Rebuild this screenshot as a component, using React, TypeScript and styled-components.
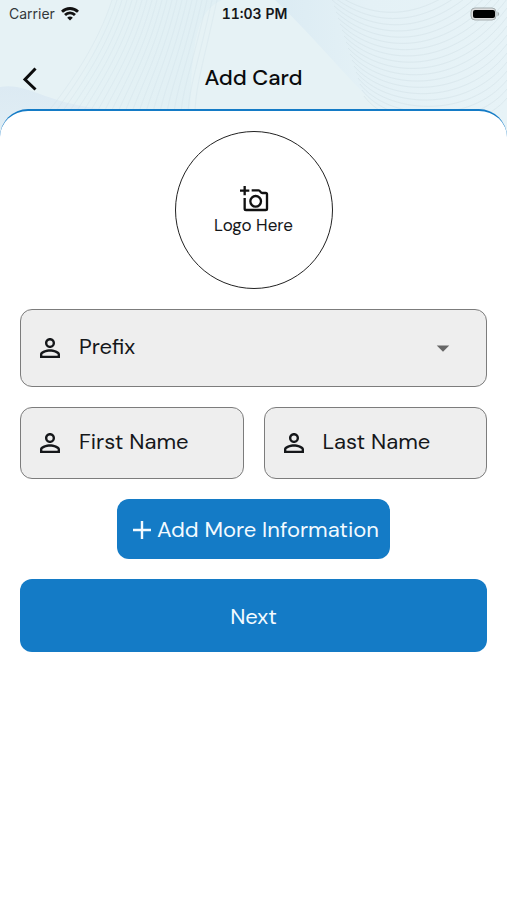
import React from "react";
import styled, { createGlobalStyle } from "styled-components";
import { MdPersonOutline, MdArrowDropDown } from "react-icons/md";

const GlobalStyle = createGlobalStyle`
  *, *::before, *::after { box-sizing: border-box; }
  body {
    margin: 0;
    background: #fff;
    color: #15171a;
    font-family: "DM Sans", Inter, "Liberation Sans", sans-serif;
  }
  button, input, select { font: inherit; color: inherit; }
`;

const blue = "#147bc6";

const Screen = styled.div`
  position: relative;
  isolation: isolate;
  display: flex;
  flex-direction: column;
  min-height: 100vh;
`;

const Backdrop = styled.svg`
  position: absolute;
  z-index: -1;
  top: 0;
  left: 0;
  width: 100%;
  height: 150px;
  background: #e6f2f5;
`;

const StatusBar = styled.div`
  display: grid;
  grid-template-columns: 1fr auto 1fr;
  align-items: center;
  height: 28px;
  padding: 0 7px 0 9px;
  font-family: Inter, "Liberation Sans", sans-serif;
  font-size: 14px;
  line-height: 20px;
`;

const Carrier = styled.span`
  display: flex;
  align-items: center;
  gap: 6px;
  color: #33383b;
`;

const Clock = styled.time`
  font-size: 14px;
  font-weight: 600;
  font-variant-numeric: tabular-nums;
`;

const Battery = styled.svg`
  justify-self: end;
`;

const AppBar = styled.header`
  display: grid;
  grid-template-columns: 40px 1fr 40px;
  align-items: center;
  height: 81px;
  padding: 20px 10px 0;
`;

const BackButton = styled.button`
  display: grid;
  place-items: center;
  width: 40px;
  height: 40px;
  padding: 0;
  border: 0;
  background: none;
  cursor: pointer;
`;

const Title = styled.h1`
  margin: 0;
  padding-bottom: 2px;
  text-align: center;
  font-size: 22px;
  line-height: 28px;
  font-weight: 500;
  color: #090b0c;
`;

const Sheet = styled.form`
  flex: 1;
  display: flex;
  flex-direction: column;
  gap: 20px;
  padding: 20px;
  border-top: 2px solid ${blue};
  border-radius: 28px 28px 0 0;
  background: #fff;
`;

const LogoPicker = styled.button`
  align-self: center;
  display: flex;
  flex-direction: column;
  align-items: center;
  justify-content: center;
  width: 158px;
  height: 158px;
  padding: 2px 0 0;
  border: 1px solid #222;
  border-radius: 50%;
  background: #fff;
  font-size: 17px;
  line-height: 24px;
  cursor: pointer;
`;

const Field = styled.label<{ $tall?: boolean }>`
  display: flex;
  align-items: center;
  gap: 14px;
  min-width: 0;
  height: ${(p) => (p.$tall ? 78 : 72)}px;
  padding: 0 14px;
  border: 1px solid #7c7c7c;
  border-radius: 12px;
  background: #eee;
  font-size: 22px;

  > svg { flex: none; }
`;

const TextInput = styled.input`
  flex: 1;
  min-width: 0;
  height: 100%;
  padding: 0 0 4px;
  border: 0;
  outline: 0;
  background: none;

  &::placeholder { color: #15171a; opacity: 1; }
`;

const Select = styled.select`
  flex: 1;
  min-width: 0;
  height: 100%;
  padding: 0 0 4px;
  border: 0;
  outline: 0;
  appearance: none;
  background: none;
`;

const SelectArrow = styled(MdArrowDropDown)`
  margin-right: 14px;
  color: #666;
  pointer-events: none;
`;

const NameRow = styled.div`
  display: grid;
  grid-template-columns: 1fr 1fr;
  gap: 20px;
`;

const PrimaryButton = styled.button<{ $compact?: boolean }>`
  display: flex;
  align-items: center;
  justify-content: center;
  align-self: ${(p) => (p.$compact ? "center" : "stretch")};
  gap: 6px;
  height: ${(p) => (p.$compact ? 60 : 73)}px;
  padding: ${(p) => (p.$compact ? "2px 11px 0 16px" : "2px 16px 0")};
  border: 0;
  border-radius: 12px;
  background: ${blue};
  color: #f2faff;
  font-size: 22px;
  line-height: 28px;
  cursor: pointer;
`;

const range = (n: number) => Array.from({ length: n }, (_, i) => i);

function Waves() {
  return (
    <Backdrop viewBox="0 0 507 150" preserveAspectRatio="xMidYMid slice" aria-hidden="true">
      <defs>
        <linearGradient id="band" x1="0" y1="0" x2="1" y2="0">
          <stop offset="0" stopColor="#dbebf3" />
          <stop offset=".4" stopColor="#e4f1f6" />
          <stop offset="1" stopColor="#e7f3f7" />
        </linearGradient>
        <linearGradient id="fan" x1="0" y1="0" x2="1" y2="0">
          <stop offset=".2" stopColor="#e5f2f5" />
          <stop offset="1" stopColor="#e0eff4" />
        </linearGradient>
        <linearGradient id="hill" x1="0" y1="0" x2="0" y2="1">
          <stop offset="0" stopColor="#dceaf3" />
          <stop offset="1" stopColor="#e2eff5" />
        </linearGradient>
      </defs>
      <path d="M112 0H222C196 12 190 40 190 150H40C78 104 94 52 112 0Z" fill="url(#fan)" />
      <path d="M275 0H507V150H430C370 110 330 52 275 0Z" fill="url(#band)" />
      <path d="M0 87C28 82 45 104 105 109V150H0Z" fill="url(#hill)" />
      <g fill="none" stroke="#cfe0e9" strokeWidth="1" opacity=".35">
        {range(22).map((i) => (
          <path
            key={i}
            d={`M${112 + i * 5} 0C${98 + i * 5} ${44 + i} ${70 + i * 6} 84 ${48 + i * 7} 112`}
          />
        ))}
      </g>
      <g fill="none" stroke="#d2e1e7" strokeWidth="1" opacity=".5">
        {range(19).map((i) => (
          <path
            key={i}
            d={`M${328 + i * 2} ${i * 6 - 12}C${372 + i} ${24 + i * 6} ${438 + i * 2} ${30 + i * 6} 507 ${i * 9 - 64}`}
          />
        ))}
      </g>
    </Backdrop>
  );
}

function WifiIcon() {
  return (
    <svg width="18" height="14" viewBox="0 0 18 14" fill="none" stroke="#111" strokeWidth="2.8" aria-hidden="true">
      <path d="M1 4.8C5.5 .4 12.5 .4 17 4.8" />
      <path d="M4 8C6.8 5.2 11.2 5.2 14 8" />
      <path d="M9 13.6L6.2 10.7C7.8 9.2 10.2 9.2 11.8 10.7Z" fill="#111" stroke="none" />
    </svg>
  );
}

function AddPhotoIcon() {
  return (
    <svg width="30" height="28" viewBox="0 0 90 84" fill="none" stroke="#111" strokeWidth="7" aria-hidden="true">
      <path d="M17 3V31M3 17H31" />
      <path d="M38 16H59C64 16 64 24 70 24H80Q84 24 84 28V71Q84 75 80 75H21Q17 75 17 71V39" />
      <circle cx="50" cy="49" r="16" />
    </svg>
  );
}

export default function App() {
  return (
    <>
      <GlobalStyle />
      <Screen>
        <Waves />
        <StatusBar>
          <Carrier>
            Carrier
            <WifiIcon />
          </Carrier>
          <Clock>11:03 PM</Clock>
          <Battery width="30" height="14" viewBox="0 0 30 14" role="img" aria-label="Battery full">
            <rect x="1" y="1" width="25" height="12" rx="4" fill="#ddd" stroke="#a5adaf" />
            <rect x="3" y="3" width="22" height="8" rx="2" fill="#000" />
            <path d="M27.5 4.5Q31 7 27.5 9.5Z" fill="#a5adaf" />
          </Battery>
        </StatusBar>
        <AppBar>
          <BackButton type="button" aria-label="Back">
            <svg width="16" height="24" viewBox="0 0 16 24" fill="none" stroke="#0c0c0c" strokeWidth="3">
              <path d="M13.5 1.5L3 12.5L13.5 22.5" />
            </svg>
          </BackButton>
          <Title>Add Card</Title>
        </AppBar>
        <Sheet onSubmit={(e) => e.preventDefault()}>
          <LogoPicker type="button">
            <AddPhotoIcon />
            Logo Here
          </LogoPicker>
          <Field $tall>
            <MdPersonOutline size={30} />
            <Select aria-label="Prefix" defaultValue="">
              <option value="">Prefix</option>
            </Select>
            <SelectArrow size={30} />
          </Field>
          <NameRow>
            <Field>
              <MdPersonOutline size={30} />
              <TextInput aria-label="First Name" placeholder="First Name" />
            </Field>
            <Field>
              <MdPersonOutline size={30} />
              <TextInput aria-label="Last Name" placeholder="Last Name" />
            </Field>
          </NameRow>
          <PrimaryButton type="button" $compact>
            <svg width="18" height="18" viewBox="0 0 18 18" stroke="currentColor" strokeWidth="2.4" aria-hidden="true">
              <path d="M9 0V18M0 9H18" />
            </svg>
            Add More Information
          </PrimaryButton>
          <PrimaryButton type="submit">Next</PrimaryButton>
        </Sheet>
      </Screen>
    </>
  );
}
